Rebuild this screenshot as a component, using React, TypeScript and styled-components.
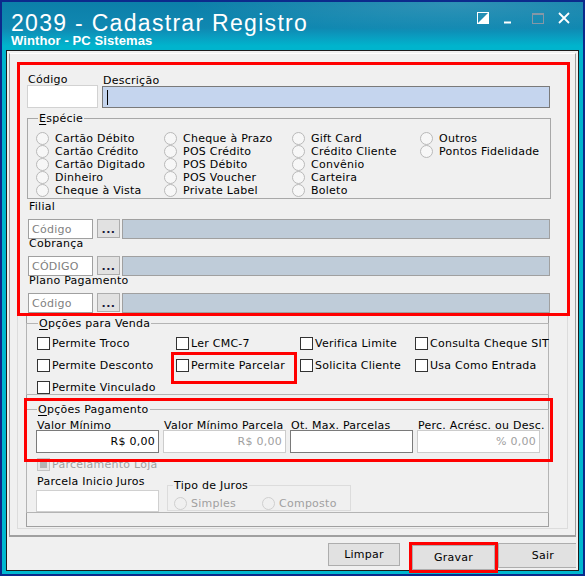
import styled, { createGlobalStyle } from 'styled-components'

const GlobalStyle = createGlobalStyle`
  html, body {
    margin: 0;
    padding: 0;
    background: #ffffff;
  }
  body {
    font-family: 'DejaVu Sans', Verdana, sans-serif;
    font-size: 11px;
    letter-spacing: 0.25px;
    color: #000000;
  }
  * {
    box-sizing: border-box;
  }
`

const Window = styled.div`
  width: 585px;
  height: 576px;
  display: flex;
  flex-direction: column;
  padding: 0 4px 4px;
  overflow: hidden;
  border: 2px solid #0c2a8c;
  background:
    radial-gradient(ellipse 380px 40px at 78% 2px, rgba(255, 255, 255, 0.14), rgba(255, 255, 255, 0) 70%),
    linear-gradient(180deg, #0c7fa9 0px, #1088b1 26px, #0a9bbf 34px, #00b4cd 44px, #00b8d0 100%);
`

const TitleBar = styled.header`
  flex: none;
  height: 48px;
  display: flex;
  justify-content: space-between;
  align-items: flex-start;
  padding: 12px 9px 0 5px;
  color: #ffffff;
`

const Heading = styled.div`
  display: flex;
  flex-direction: column;
`

const Title = styled.h1`
  margin: 0;
  font: 400 23px/19px 'Liberation Sans', Arial, sans-serif;
  letter-spacing: 1.3px;
  white-space: nowrap;
`

const Subtitle = styled.div`
  margin-top: 2px;
  font: 700 13px/11px 'Liberation Sans', Arial, sans-serif;
  letter-spacing: 0.1px;
  white-space: nowrap;
`

const Controls = styled.div`
  display: flex;
  align-items: flex-start;
  margin-top: -2px;
`

const ControlGap = styled.span<{ $w: number }>`
  width: ${p => p.$w}px;
`

const Client = styled.div`
  flex: 1;
  display: flex;
  flex-direction: column;
  padding: 2px 2px 0;
  background: #f0f0f0;
  border: 1px solid #1b1b1b;
`

const MainPanel = styled.div`
  padding: 9px 7px 6px;
  border: 1px solid #a0a0a0;
  border-top-color: #ffffff;
  border-bottom-width: 2px;
`

const InnerPanel = styled.div`
  padding-bottom: 1px;
  border: 1px solid #dcdcdc;
`

const RedSection = styled.section`
  margin: -2px -3px 0 -1px;
  padding: 10px 0 0;
  border: 3px solid #ff0000;
`

const TopRow = styled.div`
  display: flex;
  align-items: flex-end;
  gap: 4px;
  padding-left: 7px;
`

const Field = styled.div`
  display: flex;
  flex-direction: column;
`

const Label = styled.span<{ $lh?: number; $gap?: number }>`
  display: block;
  line-height: ${p => p.$lh ?? 10}px;
  margin-bottom: ${p => p.$gap ?? 0}px;
  padding-left: 1px;
  white-space: nowrap;
`

const TextBox = styled.div<{ $w: number; $h: number; $border?: string; $bg?: string; $color?: string; $right?: boolean }>`
  width: ${p => p.$w}px;
  height: ${p => p.$h}px;
  display: flex;
  align-items: center;
  justify-content: ${p => (p.$right ? 'flex-end' : 'flex-start')};
  padding: 0 3px;
  border: 1px solid ${p => p.$border ?? '#a0a0a0'};
  background: ${p => p.$bg ?? '#ffffff'};
  color: ${p => p.$color ?? '#000000'};
  white-space: nowrap;
`

const Caret = styled.span`
  width: 1px;
  height: 15px;
  margin-left: 1px;
  background: #000000;
`

const Group = styled.fieldset<{ $w?: number; $pad: string; $line?: string }>`
  margin: 0;
  min-width: 0;
  width: ${p => (p.$w ? `${p.$w}px` : 'auto')};
  padding: ${p => p.$pad};
  border: 1px solid ${p => p.$line ?? '#b4b4b4'};
`

const Legend = styled.legend<{ $shift?: number }>`
  margin-left: ${p => p.$shift ?? 1}px;
  padding: 0 1px;
  line-height: 13px;
  white-space: nowrap;

  u {
    text-decoration-thickness: 1px;
    text-underline-offset: 2px;
  }
`

const EspecieGroup = styled(Group)`
  margin: 4px 0 0 7px;
`

const RadioGrid = styled.div`
  display: grid;
  grid-template-columns: repeat(4, 128px);
  grid-template-rows: repeat(5, 13px);
  grid-auto-flow: column;
`

const RadioItem = styled.label<{ $off?: boolean; $w?: number }>`
  display: flex;
  align-items: center;
  gap: ${p => (p.$off ? 4 : 6)}px;
  width: ${p => (p.$w ? `${p.$w}px` : 'auto')};
  line-height: 13px;
  white-space: nowrap;
  color: ${p => (p.$off ? '#a0a0a0' : '#000000')};
`

const RadioDot = styled.span<{ $off?: boolean }>`
  flex: none;
  width: 13px;
  height: 13px;
  border-radius: 50%;
  border: 1px solid ${p => (p.$off ? '#cfcfcf' : '#b9b9b9')};
  background: ${p => (p.$off ? '#f0f0f0' : '#f7f7f7')};
`

const Lookups = styled.div`
  margin-top: 3px;
  padding-left: 8px;
`

const LookupRow = styled.div`
  display: flex;
  flex-direction: column;
`

const LookupFields = styled.div`
  display: flex;
  align-items: flex-start;
`

const DotsButton = styled.button`
  width: 23px;
  height: 19px;
  margin: 0 2px 0 4px;
  padding: 2px 0 0;
  border: 1px solid #adadad;
  background: #e1e1e1;
  font: 700 11px/11px 'DejaVu Sans', sans-serif;
  color: #1a1a3a;
  letter-spacing: 0.5px;
`

const LowerPanel = styled.div`
  width: 523px;
  margin-left: 8px;
  padding: 1px 0 13px;
  border: 1px solid #a0a0a0;
  border-top: none;
`

const VendaGroup = styled(Group)`
  margin: 0 -1px;
`

const CheckColumns = styled.div`
  display: flex;
`

const CheckColumn = styled.div<{ $w: number }>`
  width: ${p => p.$w}px;
  display: flex;
  flex-direction: column;
  gap: 9px;
`

const CheckItem = styled.label<{ $marked?: boolean; $off?: boolean }>`
  position: relative;
  display: flex;
  align-items: center;
  gap: 2px;
  line-height: 13px;
  white-space: nowrap;
  color: ${p => (p.$off ? '#a0a0a0' : '#000000')};

  &::after {
    content: '';
    display: ${p => (p.$marked ? 'block' : 'none')};
    position: absolute;
    left: -5px;
    top: -7px;
    width: 120px;
    height: 26px;
    border: 3px solid #ff0000;
  }
`

const CheckBox = styled.span<{ $off?: boolean }>`
  flex: none;
  width: 13px;
  height: 13px;
  border: 1px solid ${p => (p.$off ? '#c4c4c4' : '#333333')};
  background: ${p => (p.$off ? '#e6e6e6' : '#ffffff')};
  display: flex;
  align-items: center;
  justify-content: center;

  &::before {
    content: '';
    display: ${p => (p.$off ? 'block' : 'none')};
    width: 7px;
    height: 7px;
    background: #b4b4b4;
  }
`

const PayArea = styled.div`
  position: relative;
  margin: 8px -1px 0;
`

const PayMark = styled.div`
  position: absolute;
  left: -2px;
  top: -5px;
  width: 529px;
  height: 64px;
  border: 3px solid #ff0000;
  pointer-events: none;
`

const FieldGrid = styled.div`
  display: grid;
  grid-template-columns: repeat(4, 123px);
  column-gap: 4px;
`

const LoanRow = styled.div`
  margin: 5px 0 0 1px;
`

const BottomRow = styled.div`
  display: flex;
  align-items: flex-start;
  gap: 8px;
  margin-top: 6px;
`

const TipoGroup = styled(Group)`
  margin-top: 2px;
`

const RadioRow = styled.div`
  display: flex;
`

const ButtonBar = styled.footer`
  flex: 1;
  display: flex;
  justify-content: flex-end;
  align-items: flex-start;
  padding-top: 6px;
`

const ActionButton = styled.button<{ $w: number; $h?: number; $primary?: boolean; $edge?: boolean }>`
  width: ${p => p.$w}px;
  height: ${p => p.$h ?? 23}px;
  margin: ${p => (p.$primary ? '2px 0 0 12px' : p.$edge ? '0 0 0 3px' : '0')};
  padding: 0 0 0 ${p => (p.$edge ? 11 : 0)}px;
  border: 1px solid #adadad;
  border-right: ${p => (p.$edge ? 'none' : '1px solid #adadad')};
  background: #e1e1e1;
  font: 400 11px/13px 'DejaVu Sans', sans-serif;
  letter-spacing: 0.25px;
  color: #000000;
  outline: ${p => (p.$primary ? '3px solid #ff0000' : 'none')};
`

const especies = [
  'Cartão Débito', 'Cartão Crédito', 'Cartão Digitado', 'Dinheiro', 'Cheque à Vista',
  'Cheque à Prazo', 'POS Crédito', 'POS Débito', 'POS Voucher', 'Private Label',
  'Gift Card', 'Crédito Cliente', 'Convênio', 'Carteira', 'Boleto',
  'Outros', 'Pontos Fidelidade',
]

const lookups = [
  { label: 'Filial', code: 'Código' },
  { label: 'Cobrança', code: 'CÓDIGO' },
  { label: 'Plano Pagamento', code: 'Código' },
]

const vendaColumns: { w: number; items: { text: string; marked?: boolean }[] }[] = [
  { w: 139, items: [{ text: 'Permite Troco' }, { text: 'Permite Desconto' }, { text: 'Permite Vinculado' }] },
  { w: 124, items: [{ text: 'Ler CMC-7' }, { text: 'Permite Parcelar', marked: true }] },
  { w: 115, items: [{ text: 'Verifica Limite' }, { text: 'Solicita Cliente' }] },
  { w: 130, items: [{ text: 'Consulta Cheque SIT' }, { text: 'Usa Como Entrada' }] },
]

const payFields = [
  { label: 'Valor Mínimo', value: 'R$ 0,00', dim: false },
  { label: 'Valor Mínimo Parcela', value: 'R$ 0,00', dim: true },
  { label: 'Ot. Max. Parcelas', value: '', dim: false },
  { label: 'Perc. Acrésc. ou Desc.', value: '% 0,00', dim: true },
]

function WindowControls () {
  return (
    <Controls>
      <svg width='12' height='12' viewBox='0 0 12 12'>
        <rect x='0.5' y='0.5' width='11' height='11' fill='none' stroke='#ffffff' />
        <polygon points='11.5,0.5 11.5,11.5 0.5,11.5' fill='#ffffff' />
      </svg>
      <ControlGap $w={12} />
      <svg width='12' height='12' viewBox='0 0 12 12'>
        <rect x='3' y='9.5' width='7' height='2' fill='#ffffff' />
      </svg>
      <ControlGap $w={19} />
      <svg width='12' height='12' viewBox='0 0 12 12'>
        <rect x='0.5' y='1.5' width='11' height='10' fill='none' stroke='#8597a6' />
        <rect x='0' y='1' width='12' height='2' fill='#8597a6' />
      </svg>
      <ControlGap $w={14} />
      <svg width='12' height='12' viewBox='0 0 12 12'>
        <path d='M1 1 L11 11 M11 1 L1 11' stroke='#ffffff' strokeWidth='1.8' />
      </svg>
    </Controls>
  )
}

export default function App () {
  return (
    <>
      <GlobalStyle />
      <Window>
        <TitleBar>
          <Heading>
            <Title>2039 - Cadastrar Registro</Title>
            <Subtitle>Winthor - PC Sistemas</Subtitle>
          </Heading>
          <WindowControls />
        </TitleBar>

        <Client>
          <MainPanel>
            <InnerPanel>
              <RedSection>
                <TopRow>
                  <Field>
                    <Label>Código</Label>
                    <TextBox $w={71} $h={23} $border='#d2d2d2' />
                  </Field>
                  <Field>
                    <Label>Descrição</Label>
                    <TextBox $w={448} $h={22} $border='#7a7a7a' $bg='#c5d5ee'>
                      <Caret />
                    </TextBox>
                  </Field>
                </TopRow>

                <EspecieGroup $w={524} $pad='7px 0 1px 8px' $line='#a8a8a8'>
                  <Legend $shift={2}><u>E</u>spécie</Legend>
                  <RadioGrid>
                    {especies.map(name => (
                      <RadioItem key={name}>
                        <RadioDot />
                        {name}
                      </RadioItem>
                    ))}
                  </RadioGrid>
                </EspecieGroup>

                <Lookups>
                  {lookups.map(row => (
                    <LookupRow key={row.label}>
                      <Label $gap={7}>{row.label}</Label>
                      <LookupFields>
                        <TextBox $w={65} $h={20} $color='#7f7f7f'>{row.code}</TextBox>
                        <DotsButton>...</DotsButton>
                        <TextBox $w={428} $h={20} $bg='#bfccd9' />
                      </LookupFields>
                    </LookupRow>
                  ))}
                </Lookups>
              </RedSection>

              <LowerPanel>
                <VendaGroup $pad='7px 0 0 10px'>
                  <Legend><u>O</u>pções para Venda</Legend>
                  <CheckColumns>
                    {vendaColumns.map(col => (
                      <CheckColumn key={col.items[0].text} $w={col.w}>
                        {col.items.map(item => (
                          <CheckItem key={item.text} $marked={item.marked}>
                            <CheckBox />
                            {item.text}
                          </CheckItem>
                        ))}
                      </CheckColumn>
                    ))}
                  </CheckColumns>
                </VendaGroup>

                <PayArea>
                  <Group $pad='5px 0 0 9px'>
                    <Legend><u>O</u>pções Pagamento</Legend>
                    <FieldGrid>
                      {payFields.map(f => (
                        <Field key={f.label}>
                          <Label $lh={9}>{f.label}</Label>
                          <TextBox
                            $w={123}
                            $h={23}
                            $right
                            $border={f.dim ? '#cccccc' : '#7a7a7a'}
                            $color={f.dim ? '#a0a0a0' : '#000000'}
                          >
                            {f.value}
                          </TextBox>
                        </Field>
                      ))}
                    </FieldGrid>

                    <LoanRow>
                      <CheckItem $off>
                        <CheckBox $off />
                        Parcelamento Loja
                      </CheckItem>
                    </LoanRow>

                    <BottomRow>
                      <Field>
                        <Label $gap={3}>Parcela Inicio Juros</Label>
                        <TextBox $w={123} $h={22} $border='#d0d0d0' />
                      </Field>
                      <TipoGroup $w={184} $pad='5px 0 0 6px' $line='#dcdcdc'>
                        <Legend $shift={-1}>Tipo de Juros</Legend>
                        <RadioRow>
                          <RadioItem $off $w={88}>
                            <RadioDot $off />
                            Simples
                          </RadioItem>
                          <RadioItem $off>
                            <RadioDot $off />
                            Composto
                          </RadioItem>
                        </RadioRow>
                      </TipoGroup>
                    </BottomRow>
                  </Group>
                  <PayMark />
                </PayArea>
              </LowerPanel>
            </InnerPanel>
          </MainPanel>

          <ButtonBar>
            <ActionButton $w={72}>Limpar</ActionButton>
            <ActionButton $w={83} $h={25} $primary>Gravar</ActionButton>
            <ActionButton $w={78} $h={25} $edge>Sair</ActionButton>
          </ButtonBar>
        </Client>
      </Window>
    </>
  )
}
